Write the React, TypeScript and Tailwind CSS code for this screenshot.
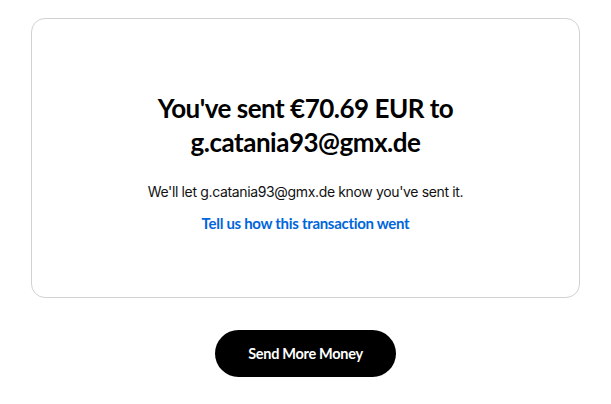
const App = () => {
  return (
    <div className="w-full min-h-[404px] bg-white px-[31px] pt-[18px] flex flex-col items-center" style={{ fontFamily: "Lato, 'Liberation Sans', sans-serif" }}>
      {/* Confirmation card */}
      <div className="w-full h-[280px] border border-[#d2d2d2] rounded-[14px] flex flex-col items-center pt-[72px]">
        <h1 className="text-[26px] leading-[34px] font-bold text-black text-center tracking-[-0.5px]">
          You've sent €70.69 EUR to
          <br />
          g.catania93@gmx.de
        </h1>
        <p className="mt-[23px] text-[14px] leading-[20px] text-[#111] tracking-[-0.35px]" style={{ fontFamily: "Inter, 'Liberation Sans', sans-serif" }}>
          We'll let g.catania93@gmx.de know you've sent it.
        </p>
        <a href="#" className="mt-[11px] text-[15px] leading-[20px] font-bold text-[#0066db] tracking-[-0.3px]">
          Tell us how this transaction went
        </a>
      </div>

      <button className="mt-[32px] w-[181px] h-[47px] rounded-full bg-black text-white text-[14.5px] font-bold tracking-[-0.3px]">
        Send More Money
      </button>
    </div>
  );
};

export default App;
